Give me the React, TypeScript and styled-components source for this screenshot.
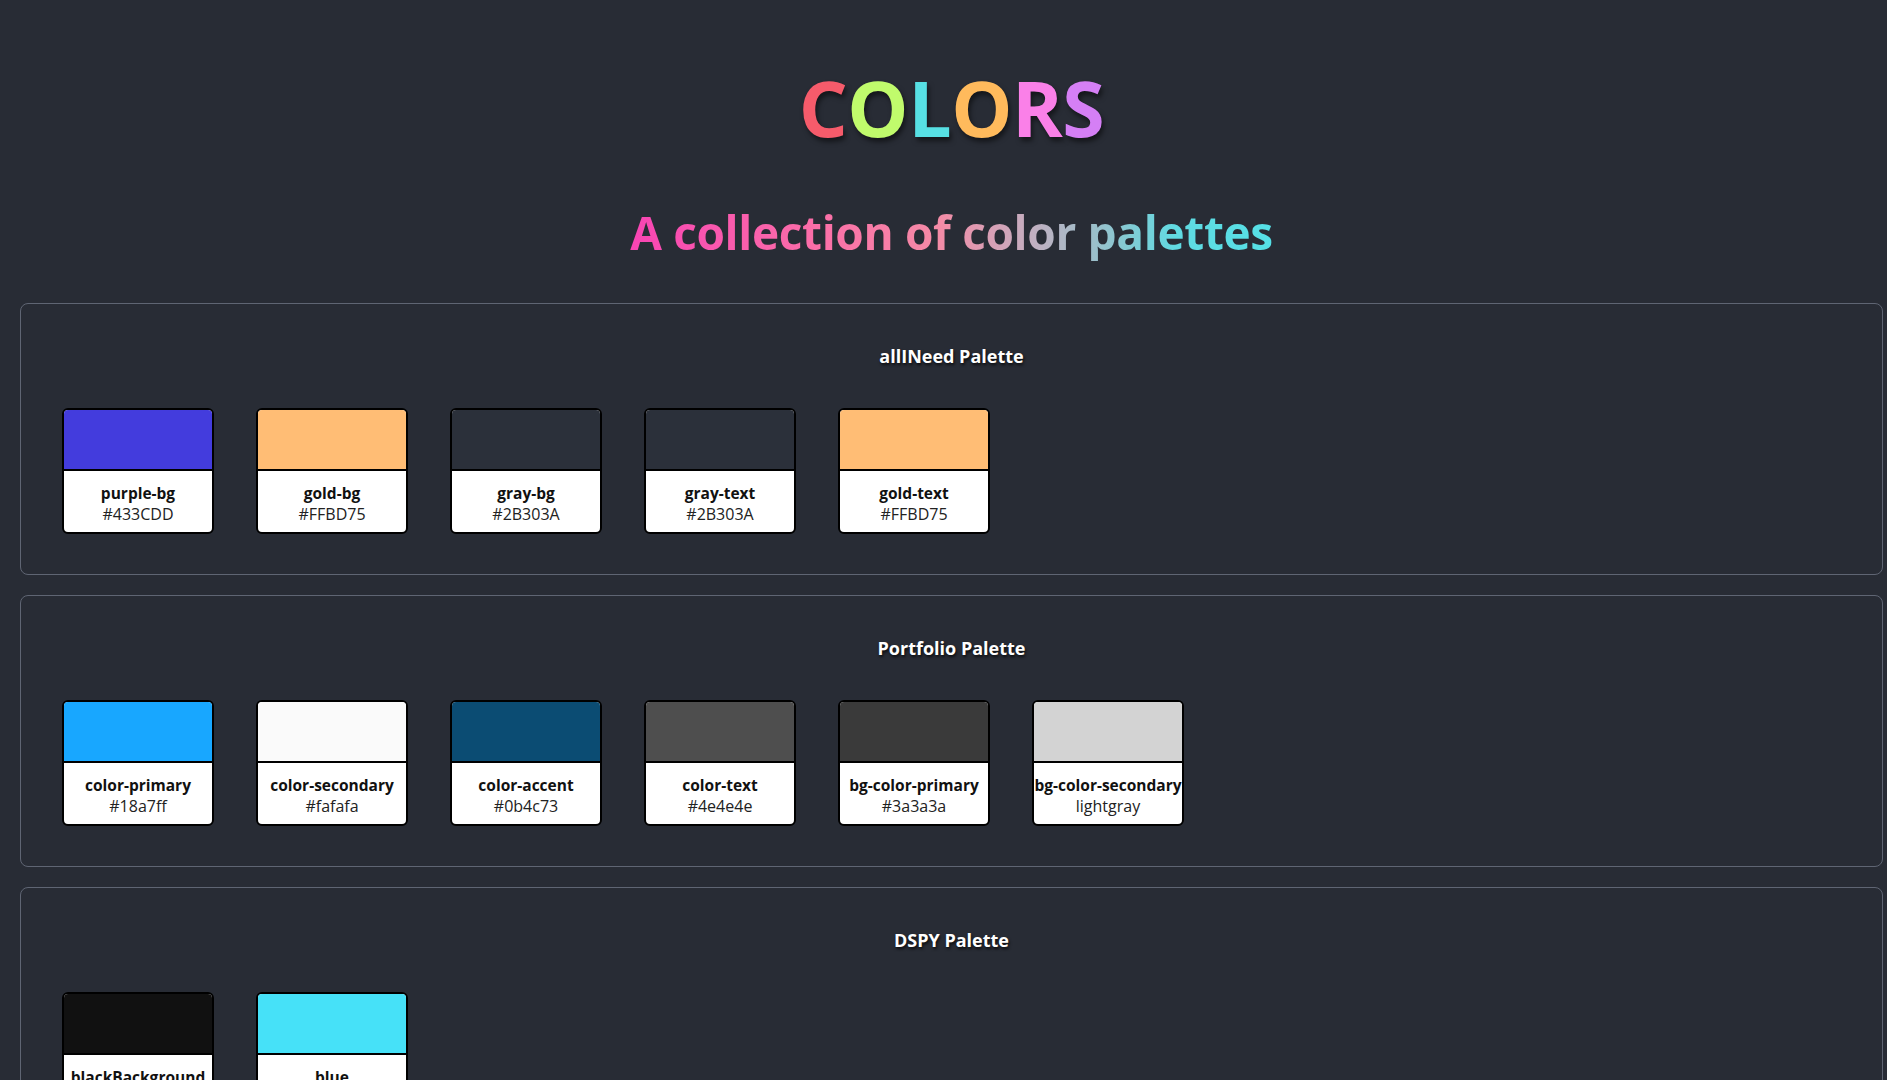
import React from 'react';
import styled, { createGlobalStyle } from 'styled-components';

interface Swatch {
  name: string;
  value: string;
}

interface Palette {
  title: string;
  colors: Swatch[];
}

const palettes: Palette[] = [
  {
    title: 'allINeed Palette',
    colors: [
      { name: 'purple-bg', value: '#433CDD' },
      { name: 'gold-bg', value: '#FFBD75' },
      { name: 'gray-bg', value: '#2B303A' },
      { name: 'gray-text', value: '#2B303A' },
      { name: 'gold-text', value: '#FFBD75' },
    ],
  },
  {
    title: 'Portfolio Palette',
    colors: [
      { name: 'color-primary', value: '#18a7ff' },
      { name: 'color-secondary', value: '#fafafa' },
      { name: 'color-accent', value: '#0b4c73' },
      { name: 'color-text', value: '#4e4e4e' },
      { name: 'bg-color-primary', value: '#3a3a3a' },
      { name: 'bg-color-secondary', value: 'lightgray' },
    ],
  },
  {
    title: 'DSPY Palette',
    colors: [
      { name: 'blackBackground', value: '#111111' },
      { name: 'blue', value: '#46e1f8' },
    ],
  },
];

const titleLetters = [
  { ch: 'C', color: '#f65b6b' },
  { ch: 'O', color: '#c0fb6c' },
  { ch: 'L', color: '#57e0e4' },
  { ch: 'O', color: '#ffba5c' },
  { ch: 'R', color: '#fa80e8' },
  { ch: 'S', color: '#d57ff5' },
];

const GlobalStyle = createGlobalStyle`
  html {
    scrollbar-width: none;
  }
  html::-webkit-scrollbar,
  body::-webkit-scrollbar {
    display: none;
  }
  body {
    margin: 0;
    background-color: #282c35;
    font-family: "Open Sans", "Noto Sans", sans-serif;
  }
`;

const Page = styled.div`
  padding: 0 4px 20px 20px;
`;

const Title = styled.h1`
  margin: 55px 0 0;
  text-align: center;
  font-size: 77px;
  font-weight: 700;
  letter-spacing: -0.5px;
  line-height: normal;
`;

const Letter = styled.span<{ $color: string }>`
  color: ${props => props.$color};
  text-shadow: 2px 4px 5px rgba(0, 0, 0, 0.5);
`;

const SubtitleRow = styled.div`
  margin-top: 41px;
  text-align: center;
`;

const Subtitle = styled.h2`
  display: inline-block;
  margin: 0;
  font-size: 46px;
  font-weight: 700;
  letter-spacing: -0.35px;
  line-height: normal;
  background-image: linear-gradient(
    90deg,
    #f844b3 0%,
    #fb70a8 30%,
    #f48ba6 48%,
    #c4aec0 62%,
    #9cbfca 72%,
    #60dbe2 85%,
    #55e0e6 100%
  );
  -webkit-background-clip: text;
  background-clip: text;
  color: transparent;
`;

const Sections = styled.div`
  margin-top: 40px;
  display: flex;
  flex-direction: column;
  gap: 20px;
`;

const PaletteBox = styled.section`
  border: 1px solid #5f6573;
  border-radius: 8px;
  padding: 40px 41px;
`;

const PaletteTitle = styled.h3`
  margin: 0;
  text-align: center;
  font-size: 18px;
  font-weight: 700;
  line-height: 24px;
  color: #ffffff;
  text-shadow: 1px 2px 3px rgba(0, 0, 0, 0.75);
`;

const SwatchRow = styled.div`
  margin-top: 40px;
  display: flex;
  flex-wrap: wrap;
  gap: 42px;
`;

const Card = styled.div`
  width: 152px;
  box-sizing: border-box;
  border: 2px solid #000;
  border-radius: 6px;
  overflow: hidden;
  background-color: #fff;
`;

const ColorBlock = styled.div<{ $color: string }>`
  height: 59px;
  background-color: ${props => props.$color};
  border-bottom: 2px solid #000;
`;

const Info = styled.div`
  height: 61px;
  box-sizing: border-box;
  padding-top: 12px;
  text-align: center;
  white-space: nowrap;
`;

const SwatchName = styled.div`
  font-size: 15.5px;
  font-weight: 700;
  line-height: 20px;
  color: #111;
`;

const SwatchValue = styled.div`
  font-size: 16px;
  font-weight: 400;
  line-height: 22px;
  color: #222;
`;

const App: React.FC = () => {
  return (
    <Page>
      <GlobalStyle />
      <Title>
        {titleLetters.map((l, i) => (
          <Letter key={i} $color={l.color}>
            {l.ch}
          </Letter>
        ))}
      </Title>
      <SubtitleRow>
        <Subtitle>A collection of color palettes</Subtitle>
      </SubtitleRow>

      <Sections>
        {palettes.map((palette) => (
          <PaletteBox key={palette.title}>
            <PaletteTitle>{palette.title}</PaletteTitle>
            <SwatchRow>
              {palette.colors.map((c) => (
                <Card key={c.name}>
                  <ColorBlock $color={c.value} />
                  <Info>
                    <SwatchName>{c.name}</SwatchName>
                    <SwatchValue>{c.value}</SwatchValue>
                  </Info>
                </Card>
              ))}
            </SwatchRow>
          </PaletteBox>
        ))}
      </Sections>
    </Page>
  );
};

export default App;
